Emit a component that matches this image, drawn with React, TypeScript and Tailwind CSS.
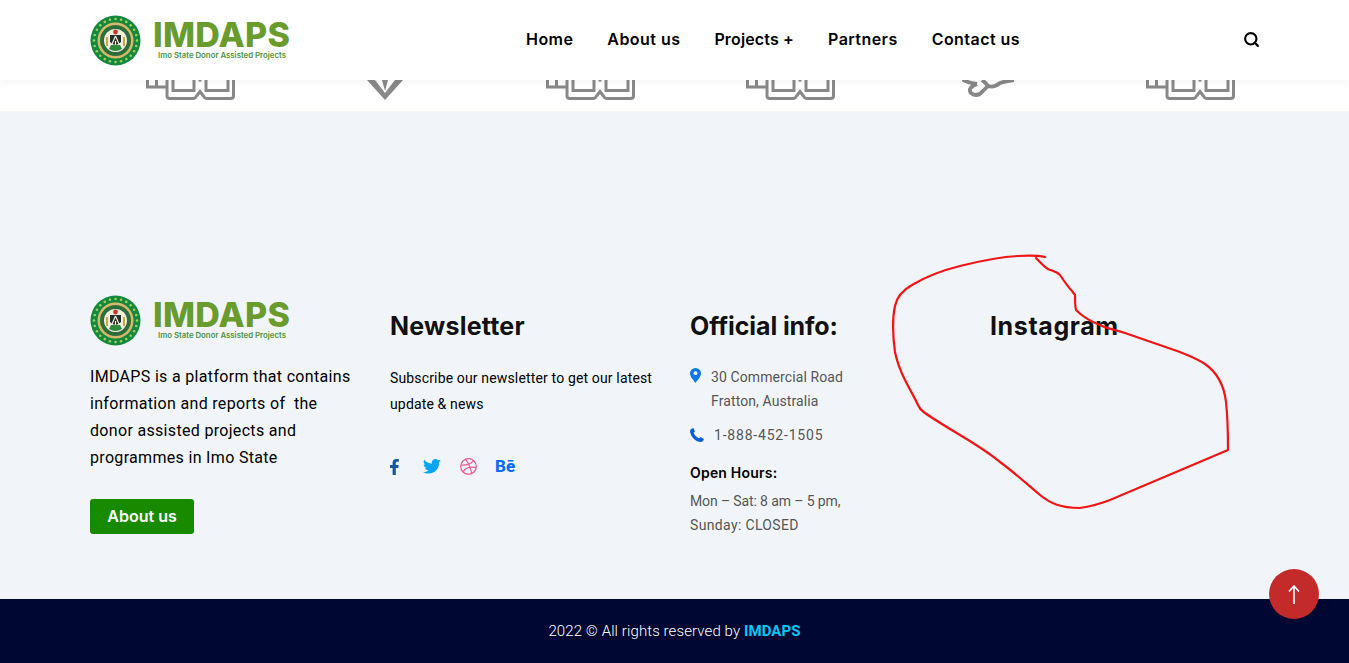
import React from 'react';
import { Search } from 'lucide-react';

const navLinks = ['Home', 'About us', 'Projects +', 'Partners', 'Contact us'];

const Seal = () => {
  const stars = Array.from({ length: 24 }, (_, i) => (i * Math.PI * 2) / 24);
  return (
    <svg width="51" height="51" viewBox="0 0 51 51" className="shrink-0">
      <circle cx="25.5" cy="25.5" r="25" fill="#14883c" />
      {stars.map((a, i) => (
        <circle key={i} cx={25.5 + Math.cos(a) * 21.5} cy={25.5 + Math.sin(a) * 21.5} r="1.3" fill="#9fce5e" />
      ))}
      <circle cx="25.5" cy="25.5" r="18" fill="#d8b869" />
      <circle cx="25.5" cy="25.5" r="15.5" fill="#2b6e3a" />
      <circle cx="25.5" cy="25.5" r="11.5" fill="#f3efe0" />
      <path d="M19 34 Q25.5 38 32 34 L30 30 H21 Z" fill="#2f8a3c" />
      <path d="M20 20 H31 V27 Q25.5 33 20 27 Z" fill="#23302a" />
      <path d="M25.5 21 L22 29 M25.5 21 L29 29 M25.5 26 V30" stroke="#f3efe0" strokeWidth="1.2" fill="none" />
      <circle cx="25.5" cy="17" r="2.4" fill="#c93a2e" />
      <path d="M17 22 V31 M34 22 V31" stroke="#c9a44a" strokeWidth="2" />
    </svg>
  );
};

const Logo = () => (
  <div className="flex items-center gap-[12px] font-['Inter',sans-serif]">
    <Seal />
    <div className="flex flex-col w-[137px] whitespace-nowrap">
      <span className="text-[34px] leading-[28px] font-extrabold text-[#6a9b2d] tracking-[0.25px]">IMDAPS</span>
      <span className="text-[7.8px] leading-[9px] mt-[2px] ml-[5px] font-semibold text-[#4c9440]">Imo State Donor Assisted Projects</span>
    </div>
  </div>
);

// the three feature icons, only their lower parts show under the header
const FrameIcon = () => (
  <svg width="90" height="21" viewBox="0 0 90 21" fill="none" stroke="#888888" strokeWidth="3">
    <path d="M1.5 0 V7 H20 M10.5 0 V7" />
    <path d="M21 0 V16 Q21 18.5 24 18.5 H47 Q49.5 18.5 50.5 16 L54 11.5 L57.5 16 Q58.5 18.5 61 18.5 H84.5 Q87.5 18.5 87.5 16 V0" />
    <path d="M27 0 V10.5 H48 V0 M60 0 V10.5 H82 V0" />
    <path d="M54 0 V1.6" />
  </svg>
);

const GemIcon = () => (
  <svg width="38" height="21" viewBox="0 0 38 21" fill="#888888">
    <path d="M1 0 H9 L19 13 V20 Z" />
    <path d="M37 0 H29 L19 13 V20 Z" />
    <path d="M16 0 H22 L19 11 Z" />
  </svg>
);

const ChainIcon = () => (
  <svg width="54" height="21" viewBox="0 0 54 21" fill="none" stroke="#888888" strokeWidth="3.8">
    <path d="M0 -1 Q6 3 15 4" />
    <path d="M20 0 Q24 3 26 6" />
    <path d="M15 4 Q5 8 9 13 Q15 18 21 11 L26 6 Q32 8 38 3 Q44 1 52 0" />
  </svg>
);

const FacebookIcon = () => (
  <svg width="9" height="16" viewBox="0 0 9 16" fill="#15599f">
    <path d="M2.6 16 V9 H0 V6 H2.6 V3.8 C2.6 1.2 4.1 0 6.3 0 H8.8 V2.8 H7.2 C6.1 2.8 5.8 3.3 5.8 4.2 V6 H8.7 L8.3 9 H5.8 V16 Z" />
  </svg>
);

const TwitterIcon = () => (
  <svg width="18" height="15" viewBox="0 0 24 20" fill="#05a5f0">
    <path d="M24 2.4 a9.6 9.6 0 0 1-2.8.8 A5 5 0 0 0 23.3.5 a9.8 9.8 0 0 1-3.1 1.2 A4.9 4.9 0 0 0 11.8 6.2 A13.9 13.9 0 0 1 1.7.9 a4.9 4.9 0 0 0 1.5 6.6 A4.9 4.9 0 0 1 1 6.9 a4.9 4.9 0 0 0 3.9 4.8 a4.9 4.9 0 0 1-2.2.1 a4.9 4.9 0 0 0 4.6 3.4 A9.9 9.9 0 0 1 0 17.2 A13.9 13.9 0 0 0 7.5 19.4 c9.1 0 14-7.5 14-14 v-.6 A10 10 0 0 0 24 2.4 Z" />
  </svg>
);

const DribbbleIcon = () => (
  <svg width="17" height="17" viewBox="0 0 17 17" fill="none" stroke="#ea5a8e" strokeWidth="1.2">
    <circle cx="8.5" cy="8.5" r="7.8" />
    <path d="M5.5 1.4 C8 4.5 10.5 9.5 11.8 15.6" />
    <path d="M1 7 C6 7.4 10.5 6.4 13.6 2.6" />
    <path d="M3 14 C5 10.6 9.5 8.4 16 9.6" />
  </svg>
);

export default function App() {
  return (
    <div className="relative w-[1349px] h-[663px] overflow-hidden bg-white font-['Roboto',sans-serif]">
      {/* Header */}
      <header className="relative z-10 h-[80px] bg-white shadow-[0_2px_10px_rgba(0,0,0,0.05)] flex items-center pl-[90px] pr-[89px]">
        <Logo />
        <nav className="flex gap-[34px] ml-[236px] mb-[2px] font-['Inter',sans-serif] text-[16px] font-semibold text-black tracking-[0.45px]">
          {navLinks.map((link) => (
            <a key={link} className={link === 'Projects +' ? 'whitespace-nowrap tracking-[0.15px]' : 'whitespace-nowrap'}>{link}</a>
          ))}
        </nav>
        <button className="ml-auto mb-[2px] text-black">
          <Search size={17} strokeWidth={3} />
        </button>
      </header>

      {/* Feature icons, cut off by the header */}
      <div className="h-[31px] flex items-start">
        <div className="ml-[146px] w-[220px]"><FrameIcon /></div>
        <div className="w-[180px]"><GemIcon /></div>
        <div className="w-[200px]"><FrameIcon /></div>
        <div className="w-[216px]"><FrameIcon /></div>
        <div className="w-[184px]"><ChainIcon /></div>
        <div><FrameIcon /></div>
      </div>

      {/* Footer */}
      <footer className="h-[488px] bg-[#f1f5f9] pt-[184px] pl-[90px]">
        <div className="grid grid-cols-[300px_300px_300px_300px]">
          <div>
            <Logo />
            <p className="mt-[17px] w-[265px] text-[16px] leading-[27px] text-black tracking-[0.32px]">
              IMDAPS is a platform that contains information and reports of&nbsp; the donor assisted projects and programmes in Imo State
            </p>
            <a className="mt-[28px] pb-[1px] flex items-center justify-center w-[104px] h-[35px] rounded-[3px] bg-[#178a00] text-white text-[16px] font-semibold font-['Inter',sans-serif]">
              About us
            </a>
          </div>

          <div>
            <h3 className="mt-[14px] text-[25px] leading-[34px] font-bold text-[#111111] font-['Inter',sans-serif] tracking-[0.2px]">Newsletter</h3>
            <p className="mt-[22px] w-[270px] text-[14px] leading-[26px] text-black tracking-[0.15px]">
              Subscribe our newsletter to get our latest update &amp; news
            </p>
            <div className="mt-[41px] flex items-center">
              <span className="w-[33px]"><FacebookIcon /></span>
              <span className="w-[37px]"><TwitterIcon /></span>
              <span className="w-[35px]"><DribbbleIcon /></span>
              <span className="text-[17px] leading-[17px] font-extrabold text-[#0a6cf5]">Bē</span>
            </div>
          </div>

          <div>
            <h3 className="mt-[14px] text-[25px] leading-[34px] font-bold text-[#111111] font-['Inter',sans-serif] tracking-[-0.1px]">Official info:</h3>
            <div className="mt-[22px] flex gap-[10px] text-[14px] leading-[24px] text-[#555555] tracking-[0.1px]">
              <svg width="11" height="15" viewBox="0 0 11 15" className="mt-[3px] shrink-0">
                <path d="M5.5 0 A5.5 5.5 0 0 1 11 5.5 C11 9 7 12.5 5.5 15 C4 12.5 0 9 0 5.5 A5.5 5.5 0 0 1 5.5 0 Z" fill="#0a78e8" />
                <circle cx="5.5" cy="5.2" r="1.9" fill="#f1f5f9" />
              </svg>
              <p>30 Commercial Road<br />Fratton, Australia</p>
            </div>
            <div className="mt-[10px] flex items-center gap-[10px] text-[14px] leading-[24px] text-[#555555]">
              <svg width="14" height="14" viewBox="0 0 14 14" className="shrink-0">
                <path d="M3.4 0 L5 3.4 L3.6 4.8 C4.4 7 6.6 9.4 9 10.4 L10.4 9 L14 11 C13.6 12.6 12.4 14 11 14 C5 14 0 7.5 0 3 C0 1.6 1.6 .4 3.4 0 Z" fill="#0a5fd8" />
              </svg>
              <p className="tracking-[0.8px]">1-888-452-1505</p>
            </div>
            <p className="mt-[14px] text-[14px] leading-[24px] font-semibold text-black font-['Inter',sans-serif] tracking-[0.2px]">Open Hours:</p>
            <p className="mt-[4px] text-[14px] leading-[24px] text-[#555555]">
              <span className="tracking-[-0.12px]">Mon – Sat: 8 am – 5 pm,</span><br />
              <span className="tracking-[0.35px]">Sunday: CLOSED</span>
            </p>
          </div>

          <div>
            <h3 className="mt-[14px] text-[25px] leading-[34px] font-bold text-[#111111] font-['Inter',sans-serif] tracking-[0.6px]">Instagram</h3>
          </div>
        </div>
      </footer>

      {/* Copyright */}
      <div className="h-[64px] bg-[#000733] flex items-center justify-center text-[15px] font-light text-white tracking-[0.1px]">
        <span>2022 © All rights reserved by <b className="font-bold text-[#00c8f8]">IMDAPS</b></span>
      </div>

      {/* Hand drawn marker on top of the screenshot */}
      <svg className="absolute left-0 top-0 pointer-events-none" width="1349" height="663" fill="none">
        <path
          d="M1045 257 Q1036 255 1018 256 C1000 257 980 261 960 266 C940 271 925 277 912 285 C903 290 897 296 895 306 C893 315 892 330 895 352 C897 362 900 370 905 380 C910 390 915 398 918 405 C920 410 922 411 925 413 C935 420 945 426 960 435 C975 444 988 452 1000 462 C1015 473 1028 485 1040 495 C1050 503 1060 508 1080 508 C1092 506 1100 504 1110 500 L1228 450 C1228 430 1228 420 1226 402 C1224 385 1218 373 1205 364 C1198 359 1190 356 1180 352 L1125 333 C1112 329 1105 328 1100 325 C1092 322 1082 316 1076 310 C1075 305 1075 300 1075 295 L1072 291 C1068 287 1064 281 1060 275 C1056 271 1052 271 1048 269 C1043 266 1040 262 1036 258"
          stroke="#f01414"
          strokeWidth="2.2"
          strokeLinecap="round"
          strokeLinejoin="round"
        />
      </svg>

      {/* Back to top */}
      <button className="absolute left-[1269px] top-[569px] w-[50px] h-[50px] rounded-full bg-[#c32a2a] flex items-center justify-center">
        <svg width="12" height="19" viewBox="0 0 12 19" fill="none" stroke="#ffffff" strokeWidth="1.6">
          <path d="M6 1 V19 M1 6.5 L6 1 L11 6.5" />
        </svg>
      </button>
    </div>
  );
}
